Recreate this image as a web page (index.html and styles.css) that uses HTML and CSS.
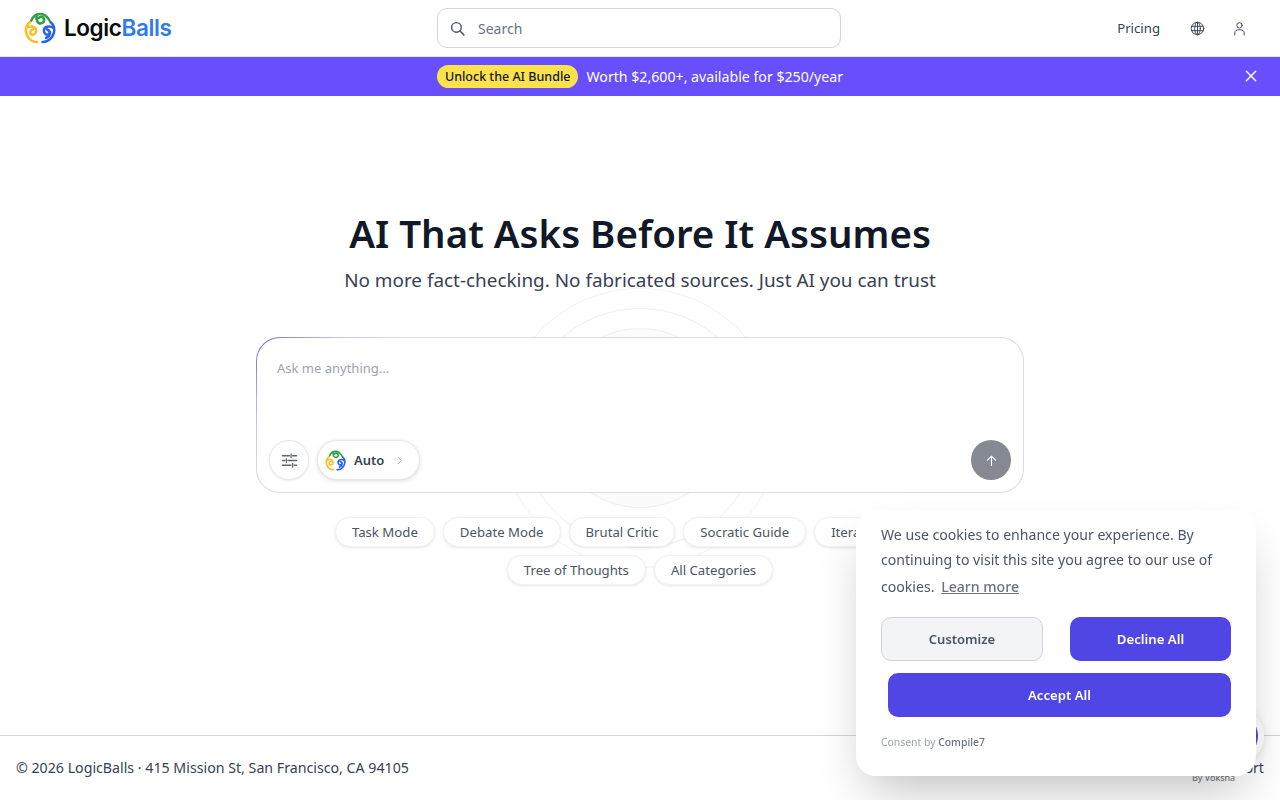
FILE: index.html
```html
<!DOCTYPE html>
<html lang="en">
<head>
<meta charset="utf-8">
<title>LogicBalls</title>
<link rel="stylesheet" href="styles.css">
</head>
<body>
<svg class="defs" width="0" height="0" aria-hidden="true">
  <symbol id="logo" viewBox="0 0 32 32">
    <g fill="none" stroke-width="2.500" stroke-linecap="round">
      <path stroke="#2f9e44" d="M7 9C9 4 12.500 2 16 2c3.500 0 7 2 9.500 6.500"/>
      <path stroke="#2f9e44" d="M12.500 3c-.5 5 1 8.500 4 8.500 3 0 4.500-3 3-5.500-1-1.500-3-2-5 0"/>
      <path stroke="#fbbf24" d="M6 10C2.500 13 1 17.500 2.500 22c1.500 4.500 5.500 8 10.500 8"/>
      <path stroke="#fbbf24" d="M2.500 16c3-2.500 8.500-2 9.500 1.500.8 3.500-2 6-4.500 5-2-1-1.500-4 1.500-5"/>
      <path stroke="#2563eb" d="M26.500 10c3.500 3 4.500 7.500 3 12-1.500 4.500-6 8-11 8"/>
      <path stroke="#2563eb" d="M29.500 16c-3-2.500-8.500-2-9.500 1.500-.8 3.500 2 6 4.500 5 2-1 1.500-4-1.500-5"/>
      <path stroke="#2563eb" d="M26 20c0 3-1.500 5-4 6"/>
    </g>
  </symbol>
</svg>

<header class="topbar">
  <a class="brand" href="#">
    <svg class="brand-mark"><use href="#logo"/></svg>
    <span class="brand-name">Logic<span class="brand-accent">Balls</span></span>
  </a>
  <label class="search">
    <svg class="search-icon" viewBox="0 0 24 24"><circle cx="10.500" cy="10.500" r="6.800"/><path d="M15.500 15.500 21 21"/></svg>
    <span class="search-text">Search</span>
  </label>
  <nav class="topnav">
    <a class="topnav-link" href="#">Pricing</a>
    <svg class="nav-icon" viewBox="0 0 24 24"><circle cx="12" cy="12" r="10"/><ellipse cx="12" cy="12" rx="4.500" ry="10"/><path d="M2.800 8.500h18.400M2.800 15.500h18.400M12 2v20"/></svg>
    <svg class="nav-icon" viewBox="0 0 24 24"><circle cx="12" cy="7" r="4.300"/><path d="M4.500 22.500v-3.500c0-3.500 2.500-5 7.500-5s7.500 1.500 7.500 5v3.500"/></svg>
  </nav>
</header>

<div class="promo">
  <div class="promo-body">
    <span class="promo-badge">Unlock the AI Bundle</span>
    <span class="promo-text">Worth $2,600+, available for $250/year</span>
  </div>
  <svg class="promo-close" viewBox="0 0 24 24"><path d="M5 5l14 14M19 5 5 19"/></svg>
</div>

<main class="hero">
  <h1 class="hero-title">AI That Asks Before It Assumes</h1>
  <p class="hero-sub">No more fact-checking. No fabricated sources. Just AI you can trust</p>
  <div class="composer-wrap">
    <div class="rings">
      <span class="ring ring-1"></span>
      <span class="ring ring-2"></span>
      <span class="ring ring-3"></span>
    </div>
    <div class="composer">
      <div class="composer-placeholder">Ask me anything...</div>
      <div class="composer-tools">
        <button class="tool-round">
          <svg viewBox="0 0 24 24"><path d="M3 6h9M16 6h5M14 3.500v5M3 12h3M10 12h11M8 9.500v5M3 18h11M18 18h3M16 15.500v5"/></svg>
        </button>
        <button class="tool-model">
          <svg class="tool-logo"><use href="#logo"/></svg>
          <span>Auto</span>
          <svg class="tool-chevron" viewBox="0 0 24 24"><path d="M9 5l7 7-7 7"/></svg>
        </button>
        <button class="send">
          <svg viewBox="0 0 24 24"><path d="M12 20V5M5.500 11.500 12 5l6.500 6.500"/></svg>
        </button>
      </div>
    </div>
    <div class="chips">
      <span class="chip">Task Mode</span>
      <span class="chip">Debate Mode</span>
      <span class="chip">Brutal Critic</span>
      <span class="chip">Socratic Guide</span>
      <span class="chip chip-wide">Iterative Mode</span>
      <span class="chip">Tree of Thoughts</span>
      <span class="chip">All Categories</span>
    </div>
  </div>
</main>

<footer class="footer">
  <span class="footer-text">© 2026 LogicBalls · 415 Mission St, San Francisco, CA 94105</span>
  <span class="footer-text">Support</span>
</footer>

<div class="chat-widget"><span class="chat-dot"></span></div>
<div class="chat-by">By Voksha</div>

<aside class="consent">
  <p class="consent-text">We use cookies to enhance your experience. By continuing to visit this site you agree to our use of cookies. <a class="consent-link" href="#">Learn more</a></p>
  <div class="consent-row">
    <button class="btn btn-light">Customize</button>
    <button class="btn btn-primary">Decline All</button>
  </div>
  <div class="consent-row consent-row-accept">
    <button class="btn btn-primary btn-wide">Accept All</button>
  </div>
  <div class="consent-by">Consent by <strong>Compile7</strong></div>
</aside>
</body>
</html>
```
FILE: styles.css
```css
* { box-sizing: border-box; }
html, body { height: 100%; }
body {
  margin: 0;
  height: 800px;
  overflow: hidden;
  display: flex;
  flex-direction: column;
  background: #fff;
  color: #111827;
  font-family: "Noto Sans", "Open Sans", sans-serif;
}
a { color: inherit; text-decoration: none; }
button { font-family: inherit; cursor: pointer; }
.defs { position: absolute; }

.topbar {
  height: 57px;
  flex: none;
  display: grid;
  grid-template-columns: 1fr 404px 1fr;
  align-items: center;
  padding: 0 26px 0 24px;
  border-bottom: 1px solid #e5e7eb;
}
.brand { display: flex; align-items: center; gap: 8px; }
.brand-mark { width: 32px; height: 32px; }
.brand-name {
  padding-bottom: 1px;
  font-family: Inter, sans-serif;
  font-size: 22.500px;
  font-weight: 600;
  letter-spacing: -0.4px;
  color: #0a0a0a;
}
.brand-accent { color: #2f7bea; }
.search {
  height: 40px;
  display: flex;
  align-items: center;
  gap: 12px;
  padding: 0 11px;
  border: 1px solid #d1d5db;
  border-radius: 10px;
}
.search-icon { width: 17px; height: 17px; fill: none; stroke: #4b5563; stroke-width: 2; stroke-linecap: round; }
.search-text { font-size: 14px; color: #6b7280; }
.topnav { display: flex; align-items: center; justify-content: flex-end; gap: 27px; padding-right: 7px; }
.topnav-link { font-size: 13.200px; color: #374151; margin-right: 3px; }
.nav-icon { width: 15px; height: 15px; fill: none; stroke: #374151; stroke-width: 1.500; stroke-linecap: round; }

.promo {
  height: 39px;
  flex: none;
  display: flex;
  align-items: center;
  justify-content: center;
  position: relative;
  background: #674ffd;
}
.promo-body { display: flex; align-items: center; gap: 8px; }
.promo-badge {
  height: 23px;
  display: flex;
  align-items: center;
  padding: 0 8px;
  border-radius: 12px;
  background: #fde24b;
  color: #111827;
  font-size: 12.500px;
  font-weight: 500;
}
.promo-text { font-size: 14.170px; line-height: 18px; color: #fff; }
.promo-close {
  position: absolute;
  right: 21px;
  top: 11px;
  width: 16px;
  height: 16px;
  fill: none;
  stroke: #fff;
  stroke-width: 2.200;
  stroke-linecap: round;
}

.hero {
  flex: 1;
  min-height: 0;
  display: flex;
  flex-direction: column;
  align-items: center;
  padding-top: 112px;
}
.hero-title {
  margin: 0;
  font-size: 38.460px;
  line-height: 50px;
  font-weight: 600;
  color: #111827;
}
.hero-sub {
  margin: 8px 0 0;
  font-size: 18.900px;
  line-height: 28px;
  color: #374151;
}
.composer-wrap {
  position: relative;
  width: 768px;
  margin-top: 43px;
}
.rings { position: absolute; z-index: -1; left: 384px; top: 91px; width: 0; height: 0; }
.ring {
  position: absolute;
  border-radius: 50%;
  border: 1px solid #eceef0;
  transform: translate(-50%, -50%);
}
.ring-1 { width: 180px; height: 180px; margin-top: -10px; background: #fbfbfb; }
.ring-2 { width: 240px; height: 240px; }
.ring-3 { width: 280px; height: 280px; border-color: #f1f2f4; }
.composer {
  position: relative;
  height: 156px;
  display: flex;
  flex-direction: column;
  justify-content: space-between;
  padding: 21px 12px 12px;
  border: 1px solid transparent;
  border-radius: 24px;
  background:
    linear-gradient(#fff, #fff) padding-box,
    linear-gradient(135deg, #7c5ce0 0, #c9c3e8 9%, #dcdde3 16%, #dcdde3 100%) border-box;
}
.composer-placeholder { padding-left: 8px; font-size: 13px; line-height: 18px; color: #9ca3af; }
.composer-tools { display: flex; align-items: center; gap: 8px; }
.tool-round {
  width: 40px;
  height: 40px;
  padding: 0;
  display: flex;
  align-items: center;
  justify-content: center;
  background: #fff;
  border: 1px solid #e5e7eb;
  border-radius: 50%;
  box-shadow: 0 1px 3px rgba(0, 0, 0, .08);
}
.tool-round svg { width: 19px; height: 19px; fill: none; stroke: #5f6673; stroke-width: 1.600; stroke-linecap: round; }
.tool-model {
  height: 40px;
  padding: 0 14px 0 7px;
  display: flex;
  align-items: center;
  gap: 8px;
  background: #fff;
  border: 1px solid #e5e7eb;
  border-radius: 20px;
  box-shadow: 0 1px 4px rgba(0, 0, 0, .14);
  font-size: 13px;
  font-weight: 600;
  color: #374151;
}
.tool-logo { width: 21px; height: 21px; }
.tool-chevron { width: 11px; height: 11px; margin-left: 2px; fill: none; stroke: #9ca3af; stroke-width: 2; stroke-linecap: round; stroke-linejoin: round; }
.send {
  width: 40px;
  height: 40px;
  margin-left: auto;
  padding: 0;
  display: flex;
  align-items: center;
  justify-content: center;
  background: #858991;
  border: 0;
  border-radius: 50%;
}
.send svg { width: 15px; height: 15px; fill: none; stroke: #fff; stroke-width: 1.800; stroke-linecap: round; stroke-linejoin: round; }
.chips {
  position: relative;
  width: 640px;
  margin: 24px auto 0;
  display: flex;
  flex-wrap: wrap;
  justify-content: center;
  gap: 8px;
}
.chip {
  height: 30px;
  display: flex;
  align-items: center;
  padding: 0 16px;
  background: #fff;
  border: 1px solid #f0f1f3;
  border-radius: 15px;
  box-shadow: 0 1px 3px rgba(0, 0, 0, .1);
  font-size: 13.200px;
  color: #4b5563;
  white-space: nowrap;
}
.chip-wide { min-width: 131px; }

.footer {
  height: 65px;
  flex: none;
  display: flex;
  align-items: center;
  justify-content: space-between;
  padding: 0 16px 2px;
  border-top: 1px solid #d1d5db;
  background: #fff;
}
.footer-text { font-size: 14.200px; color: #374151; }

.chat-widget {
  position: fixed;
  left: 1208px;
  top: 708px;
  width: 56px;
  height: 56px;
  display: flex;
  align-items: center;
  justify-content: center;
  background: #fff;
  border-radius: 50%;
  box-shadow: 0 2px 10px rgba(0, 0, 0, .12);
}
.chat-dot { width: 44px; height: 44px; border-radius: 50%; background: #4f46e5; }
.chat-by { position: fixed; left: 1192px; top: 771px; padding-right: 8px; background: #fff; font-size: 9px; color: #6b7280; }

.consent {
  position: fixed;
  left: 856px;
  top: 510px;
  width: 400px;
  height: 266px;
  padding: 12px 25px 0;
  background: #fff;
  border-radius: 20px;
  box-shadow: 0 25px 50px -12px rgba(0, 0, 0, .25);
}
.consent-text { margin: 0; font-size: 14.100px; line-height: 25px; color: #4b5563; }
.consent-link { display: inline-block; line-height: 29px; margin-left: 3px; text-decoration: underline; color: #6b7280; font-weight: 500; }
.consent-row { display: flex; justify-content: space-between; margin-top: 16px; }
.consent-row-accept { margin-top: 12px; padding-left: 7px; }
.btn {
  height: 44px;
  border-radius: 10px;
  border: 0;
  font-size: 13.200px;
  font-weight: 600;
}
.btn-light { width: 162px; background: #f3f4f6; border: 1px solid #d1d5db; color: #4b5563; font-size: 13px; }
.btn-primary { width: 161px; background: #4f46e5; color: #fff; }
.btn-wide { width: 343px; }
.consent-by { margin-top: 18px; font-size: 10.400px; color: #9ca3af; }
.consent-by strong { font-weight: 500; color: #6b7280; }
```
